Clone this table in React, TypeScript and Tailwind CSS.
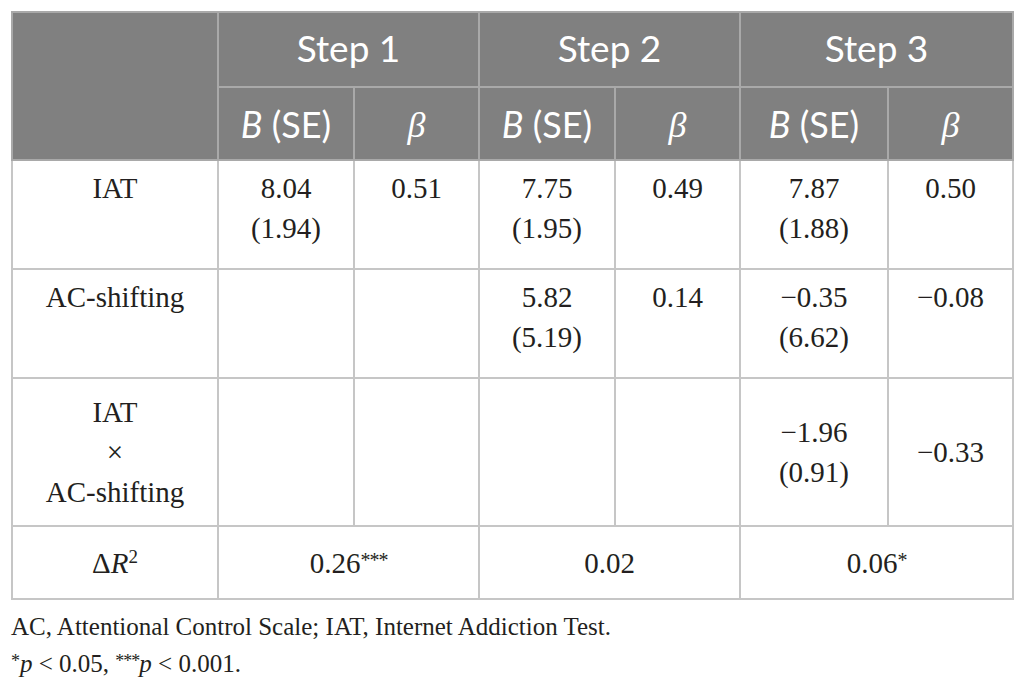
import React from "react";

const serif = "font-['Liberation_Serif',serif]";
const sans = "font-['Lato','Open_Sans',sans-serif]";

const head = `border-2 border-[#a9a9a9] bg-[#808080] text-white text-center align-middle ${sans}`;
const cell = "border-2 border-[#c6c6c6] text-center align-top pt-[7px]";
const mid = "border-2 border-[#c6c6c6] text-center align-middle";

function Stars({ n }: { n: number }) {
  return <sup className="text-[20px] -top-[6px] tracking-[-1px]">{"*".repeat(n)}</sup>;
}

export default function App() {
  return (
    <div className={`bg-white w-[1026px] h-[687px] pt-[11px] pl-[11px] text-[#231f20] ${serif}`}>
      <table className="border-collapse table-fixed w-[1001px] text-[29px] leading-[40px]">
        <colgroup>
          <col className="w-[206px]" />
          <col className="w-[136px]" />
          <col className="w-[125px]" />
          <col className="w-[136px]" />
          <col className="w-[125px]" />
          <col className="w-[148px]" />
          <col className="w-[125px]" />
        </colgroup>
        <thead>
          <tr className="h-[75px]">
            <th rowSpan={2} className={head}></th>
            <th colSpan={2} className={`${head} text-[37px] font-normal pb-[4px]`}>Step 1</th>
            <th colSpan={2} className={`${head} text-[37px] font-normal pb-[4px]`}>Step 2</th>
            <th colSpan={2} className={`${head} text-[37px] font-normal pb-[4px]`}>Step 3</th>
          </tr>
          <tr className="h-[73px]">
            {[0, 1, 2].map((i) => (
              <React.Fragment key={i}>
                <th className={`${head} text-[36px] font-normal`}>
                  <i>B</i> (SE)
                </th>
                <th className={`${head} text-[36px] font-normal`}>
                  <i className={serif}>β</i>
                </th>
              </React.Fragment>
            ))}
          </tr>
        </thead>
        <tbody>
          <tr className="h-[109px]">
            <td className={cell}>IAT</td>
            <td className={cell}>8.04<br />(1.94)</td>
            <td className={cell}>0.51</td>
            <td className={cell}>7.75<br />(1.95)</td>
            <td className={cell}>0.49</td>
            <td className={cell}>7.87<br />(1.88)</td>
            <td className={cell}>0.50</td>
          </tr>
          <tr className="h-[109px]">
            <td className={cell}>AC-shifting</td>
            <td className={cell}></td>
            <td className={cell}></td>
            <td className={cell}>5.82<br />(5.19)</td>
            <td className={cell}>0.14</td>
            <td className={cell}>−0.35<br />(6.62)</td>
            <td className={cell}>−0.08</td>
          </tr>
          <tr className="h-[148px]">
            <td className={mid}>IAT<br />×<br />AC-shifting</td>
            <td className={mid}></td>
            <td className={mid}></td>
            <td className={mid}></td>
            <td className={mid}></td>
            <td className={mid}>−1.96<br />(0.91)</td>
            <td className={mid}>−0.33</td>
          </tr>
          <tr className="h-[73px]">
            <td className={mid}>
              Δ<i>R</i><sup className="text-[19px]">2</sup>
            </td>
            <td colSpan={2} className={mid}>
              0.26<Stars n={3} />
            </td>
            <td colSpan={2} className={mid}>0.02</td>
            <td colSpan={2} className={mid}>
              0.06<Stars n={1} />
            </td>
          </tr>
        </tbody>
      </table>
      <div className="mt-[8px] text-[25px] leading-[37px]">
        <p>AC, Attentional Control Scale; IAT, Internet Addiction Test.</p>
        <p>
          <sup className="text-[18px] -top-[5px]">*</sup>
          <i>p</i> &lt; 0.05, <sup className="text-[18px] -top-[5px] tracking-[-1px]">***</sup>
          <i>p</i> &lt; 0.001.
        </p>
      </div>
    </div>
  );
}
